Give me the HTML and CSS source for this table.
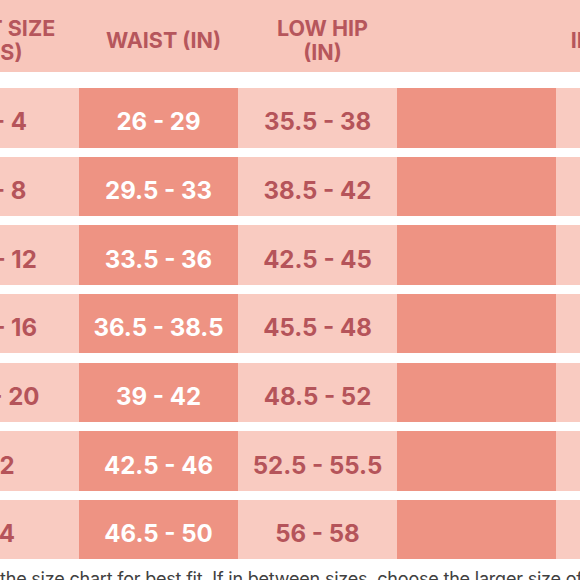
FILE: index.html
```html
<!DOCTYPE html>
<html>
<head>
<meta charset="utf-8">
<link rel="stylesheet" href="styles.css">
</head>
<body>
<div class="chart">
  <div class="head">
    <div class="hcell">PANT SIZE<br>(US)</div>
    <div class="hcell shift">WAIST (IN)</div>
    <div class="hcell shift">LOW HIP<br>(IN)</div>
    <div class="hcell"></div>
    <div class="hcell">INSEAM (IN)</div>
  </div>
  <div class="rows">
    <div class="row"><div class="cell light">0 - 4</div><div class="cell dark">26 - 29</div><div class="cell light">35.5 - 38</div><div class="cell dark"></div><div class="cell light"></div></div>
    <div class="row"><div class="cell light">6 - 8</div><div class="cell dark">29.5 - 33</div><div class="cell light">38.5 - 42</div><div class="cell dark"></div><div class="cell light"></div></div>
    <div class="row"><div class="cell light">10 - 12</div><div class="cell dark">33.5 - 36</div><div class="cell light">42.5 - 45</div><div class="cell dark"></div><div class="cell light"></div></div>
    <div class="row"><div class="cell light">14 - 16</div><div class="cell dark">36.5 - 38.5</div><div class="cell light">45.5 - 48</div><div class="cell dark"></div><div class="cell light"></div></div>
    <div class="row"><div class="cell light">18 - 20</div><div class="cell dark">39 - 42</div><div class="cell light">48.5 - 52</div><div class="cell dark"></div><div class="cell light"></div></div>
    <div class="row"><div class="cell light">22</div><div class="cell dark">42.5 - 46</div><div class="cell light">52.5 - 55.5</div><div class="cell dark"></div><div class="cell light"></div></div>
    <div class="row"><div class="cell light">24</div><div class="cell dark">46.5 - 50</div><div class="cell light">56 - 58</div><div class="cell dark"></div><div class="cell light"></div></div>
  </div>
</div>
<p class="note">the size chart for best fit. If in between sizes, choose the larger size of</p>
</body>
</html>
```
FILE: styles.css
```css
html, body {
  margin: 0;
  padding: 0;
  background: #ffffff;
}
body {
  width: 580px;
  height: 580px;
  overflow: hidden;
  font-family: Inter, "Open Sans", sans-serif;
}
.chart {
  margin-left: -80px;
  width: 795px;
}
.head {
  display: grid;
  grid-template-columns: repeat(5, 159px);
  height: 72px;
  background: #f8c6bb;
  margin-bottom: 16px;
}
.hcell {
  display: flex;
  align-items: center;
  justify-content: center;
  text-align: center;
  font-weight: 700;
  font-size: 21.5px;
  line-height: 24px;
  color: #b6565c;
  padding-top: 8px;
}
.hcell.shift {
  padding-left: 10px;
}
.rows {
  display: grid;
  grid-auto-rows: 59.5px;
  row-gap: 9.17px;
}
.row {
  display: grid;
  grid-template-columns: repeat(5, 159px);
}
.cell {
  display: flex;
  align-items: center;
  justify-content: center;
  font-weight: 700;
  font-size: 24px;
  padding-top: 8px;
  box-sizing: border-box;
}
.light {
  background: #f9cbc1;
  color: #b5545a;
}
.dark {
  background: #ee9383;
  color: #ffffff;
}
.note {
  margin: 0;
  padding-top: 10px;
  font-size: 18px;
  line-height: 20px;
  letter-spacing: -0.2px;
  color: #404040;
  white-space: nowrap;
}
```
